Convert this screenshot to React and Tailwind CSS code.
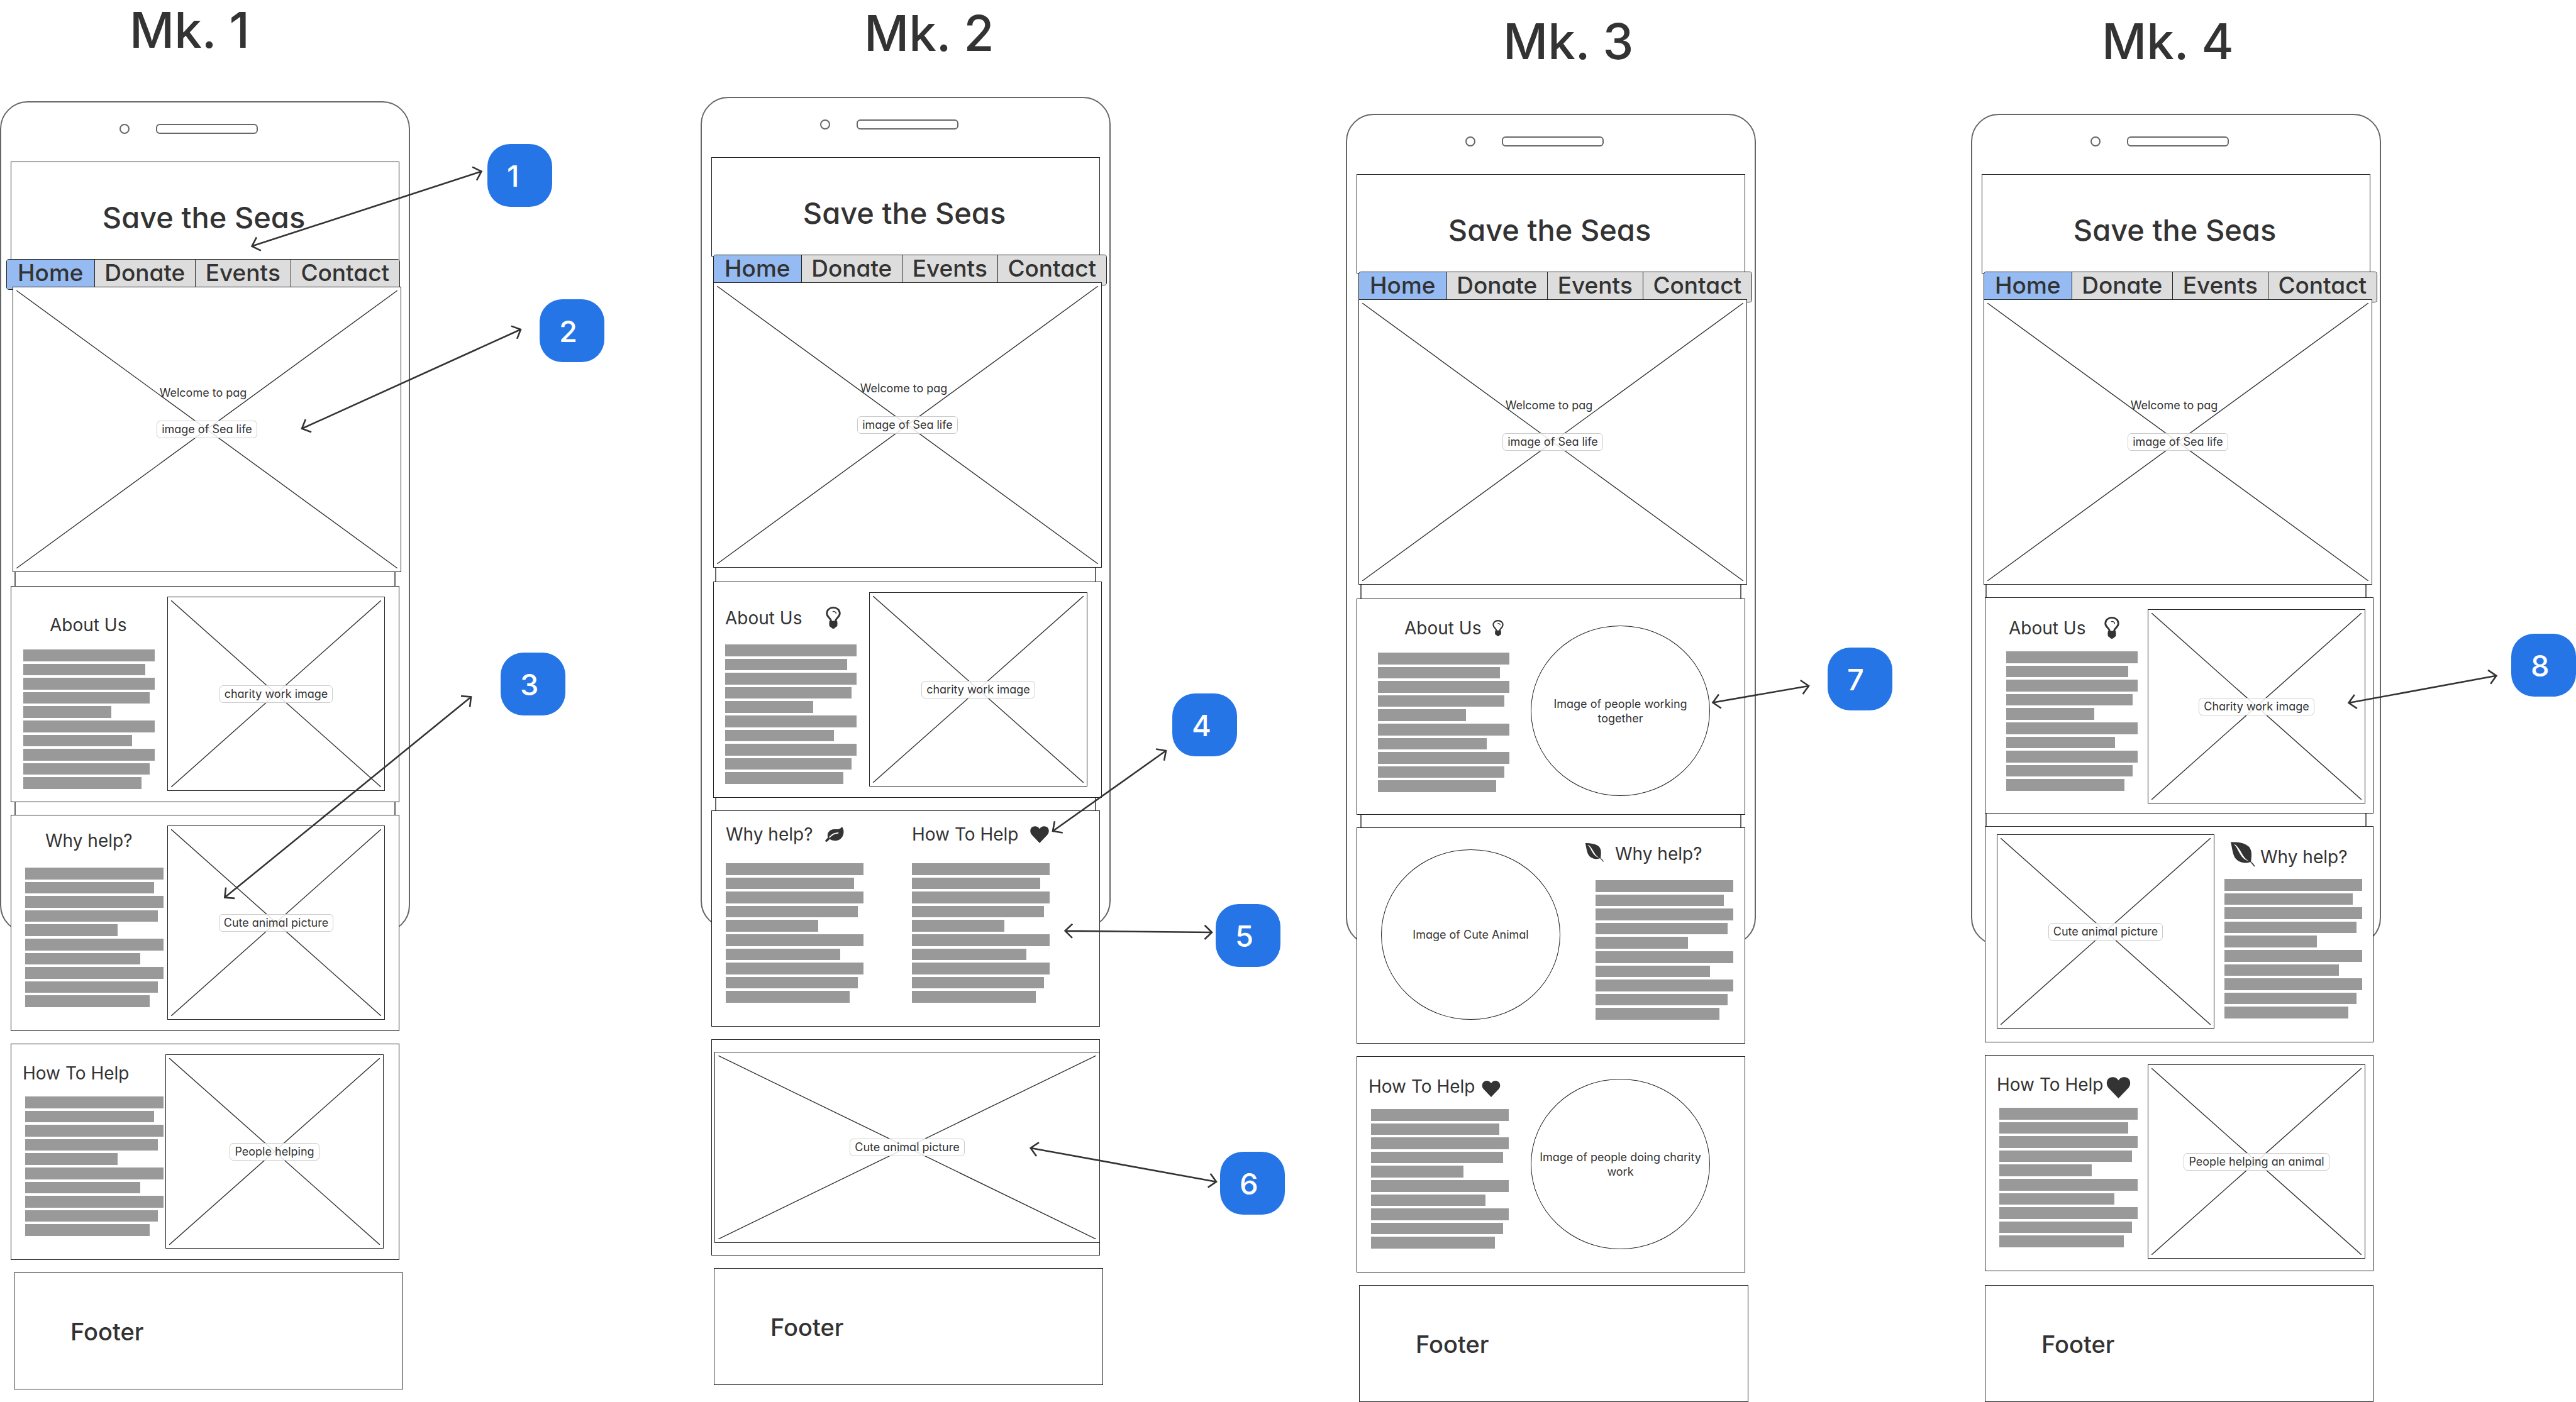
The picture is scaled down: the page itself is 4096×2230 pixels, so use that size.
import React from "react";

const LINES = [
  "w-full",
  "w-[93%]",
  "w-full",
  "w-[96%]",
  "w-[67%]",
  "w-full",
  "w-[83%]",
  "w-full",
  "w-[96%]",
  "w-[90%]",
];

function BulbIcon({ className }) {
  return (
    <svg viewBox="0 0 37 55" className={className} aria-hidden="true">
      <path
        d="M13 37 C13 28 2.3 27 2.3 16.5 C2.3 8 9.5 2.3 18.5 2.3 C27.500 2.300 34.700 8 34.700 16.500 C34.700 27 24 28 24 37"
        fill="none"
        stroke="#333"
        strokeWidth="4.4"
      />
      <path d="M17.500 12 C21.500 11.500 25 13 25.500 17" fill="none" stroke="#333" strokeWidth="2.200" strokeLinecap="round" />
      <path d="M10 35.500 H27 Q29.500 37.500 28.500 40 Q29.500 42 28.500 44 Q29.500 46 28 48 Q27.500 51 24 51.500 Q22 55 18.500 55 Q15 55 13 51.500 Q9.500 51 9 48 Q7.500 46 8.500 44 Q7.500 42 8.500 40 Q7.500 37.500 10 35.500 Z" fill="#333" />
    </svg>
  );
}

function HeartIcon({ className }) {
  return (
    <svg viewBox="0 0 48 43" className={className} aria-hidden="true">
      <path d="M24 43 L4 22 C-2 15 0 5 6 2 C13 -2 21 1 24 7 C27 1 35 -2 42 2 C48 5 50 15 44 22 Z" fill="#333" />
    </svg>
  );
}

function SwayLeafIcon({ className }) {
  return (
    <svg viewBox="0 0 48 39" className={className} aria-hidden="true">
      <path d="M43 0 C46 3 48 9 47.500 15 C46.500 28 37 36 26 36 C20 36 15 34 12 32 C9 33 7 38 3 39 C0 39 -1 36 1 34 C3 32 6 30 6.500 28 C5 22 6 15 11 11 C19 4 27 8 35 6 C39 5 41 3 43 0 Z" fill="#333" />
      <path d="M11 27 C18 20 22 17 33 16" fill="none" stroke="#fff" strokeWidth="3" strokeLinecap="round" />
    </svg>
  );
}

function PointLeafIcon({ className }) {
  return (
    <svg viewBox="0 0 64 65" className={className} aria-hidden="true">
      <path d="M0 0 C20 0 36 3 46 11 C56 20 55 35 52.700 51 C58 55 61 60 64 64 H61 L51 52 C38 57 24 55 14 45 C5 35 4 16 0 0 Z" fill="#333" />
      <path d="M8 6 C14 7 20 14 28 28 C34 39 40 47 50 51.500 C38 48 30 42 24 31 C17 18 14 11 8 6 Z" fill="#fff" />
    </svg>
  );
}

function Cross() {
  return (
    <svg
      viewBox="0 0 100 100"
      preserveAspectRatio="none"
      className="absolute inset-[5px] h-[calc(100%-10px)] w-[calc(100%-10px)]"
      aria-hidden="true"
    >
      <path d="M0 0 L100 100 M100 0 L0 100" stroke="#333" strokeWidth="1.400" fill="none" vectorEffect="non-scaling-stroke" />
    </svg>
  );
}

function Picture({ label, className, children }) {
  return (
    <figure className={`relative flex items-center justify-center border border-[#222] bg-white ${className}`}>
      <Cross />
      {children}
      <figcaption className="relative h-7 rounded-md border border-[#ccc] bg-white/85 px-[7px] text-[18px] leading-[26px] font-normal whitespace-nowrap">
        {label}
      </figcaption>
    </figure>
  );
}

function Round({ label, className }) {
  return (
    <figure className={`flex h-[271px] items-center justify-center rounded-[50%] border border-[#222] bg-white ${className}`}>
      <figcaption className="px-1 text-center text-[18px] leading-[23px] font-normal">{label}</figcaption>
    </figure>
  );
}

function TextBlock({ title, head, className, icon, before, align = "items-center" }) {
  return (
    <div className={`shrink-0 ${className}`}>
      <div className={`flex items-start ${head}`}>
        <div className={`flex ${align}`}>
          {before}
          <h3 className="text-[28px] leading-8 font-normal whitespace-nowrap">{title}</h3>
          {icon}
        </div>
      </div>
      <div className="flex h-[222px] flex-col gap-1">
        {LINES.map((w, i) => (
          <div key={i} className={`flex-1 bg-[#999] ${w}`} />
        ))}
      </div>
    </div>
  );
}

function Card({ className, children }) {
  return <article className={`relative flex h-[344px] items-start border border-[#222] bg-white ${className}`}>{children}</article>;
}

function Tab({ active, children }) {
  return (
    <a
      href="#"
      className={`flex justify-center border-[#222] text-[37px] leading-[42px] not-last:border-r ${active ? "bg-[#95bbf2]" : "bg-[#ddd]"}`}
    >
      {children}
    </a>
  );
}

function Mockup({ title, titleClass, navClass, footerClass, children, className }) {
  return (
    <section className={`min-w-0 ${className}`}>
      <h2 className={`text-[78px] leading-[84px] whitespace-nowrap ${titleClass}`}>{title}</h2>
      <div className="relative">
        <div className="absolute inset-x-0 top-0 h-[1323px] rounded-[44px] border-2 border-[#666] bg-white" />
        <div className="absolute inset-x-[23px] top-24 h-[1180px] border-2 border-[#666]" />
        <div className="relative">
          <div className="flex h-24 items-start gap-[42px] pt-[36px] pl-[190px]">
            <div className="size-4 rounded-full border-2 border-[#666]" />
            <div className="h-4 w-[162px] rounded-md border-2 border-[#666]" />
          </div>
          <header className="mx-[17px] flex h-[158px] items-center justify-center border border-[#222] bg-white pt-5 pr-1">
            <h1 className="text-[47px] leading-[60px]">Save the Seas</h1>
          </header>
          <nav
            className={`relative -mt-[3px] grid h-[49px] grid-cols-[140fr_161fr_152fr_173fr] overflow-hidden rounded-sm border border-[#222] ${navClass}`}
          >
            <Tab active>Home</Tab>
            <Tab>Donate</Tab>
            <Tab>Events</Tab>
            <Tab>Contact</Tab>
          </nav>
          <Picture label="image of Sea life" className="-mt-[5px] mr-[14px] ml-5 h-[454px]">
            <p className="absolute inset-x-0 top-[156px] pr-3 text-center text-[18px] leading-6 font-normal">Welcome to pag</p>
          </Picture>
          {children}
          <footer className={`relative h-[186px] border border-[#222] bg-white pt-[73px] pl-[89px] ${footerClass}`}>
            <p className="text-[38px] leading-10">Footer</p>
          </footer>
        </div>
      </div>
    </section>
  );
}

const CALLOUTS = [
  { n: 1, x: 775, y: 229, from: [400.5, 391.6], to: [765.5, 272.6] },
  { n: 2, x: 858, y: 476, from: [480, 681.8], to: [828, 524] },
  { n: 3, x: 796, y: 1038, from: [357.3, 1427.5], to: [749, 1108.5] },
  { n: 4, x: 1864, y: 1103, from: [1674, 1322], to: [1854, 1194] },
  { n: 5, x: 1933, y: 1438, from: [1693.6, 1480.6], to: [1927, 1483] },
  { n: 6, x: 1940, y: 1832, from: [1638.7, 1826], to: [1934, 1879.7] },
  { n: 7, x: 2906, y: 1030, from: [2723.5, 1117.5], to: [2876, 1091] },
  { n: 8, x: 3993, y: 1008, from: [3734.5, 1118], to: [3969.4, 1074.8] },
];

const BOARD_W = 4096;
const BOARD_H = 2230;

function headPath([x, y], angle) {
  const arm = (t) => `${x + 16 * Math.cos(angle + t)} ${y + 16 * Math.sin(angle + t)}`;
  return `M${arm(0.77)} L${x} ${y} L${arm(-0.77)}`;
}

function Arrows() {
  return (
    <svg
      viewBox={`0 0 ${BOARD_W} ${BOARD_H}`}
      preserveAspectRatio="none"
      className="pointer-events-none absolute inset-0 h-full w-full"
      aria-hidden="true"
    >
      {CALLOUTS.map(({ n, from, to }) => {
        const a = Math.atan2(to[1] - from[1], to[0] - from[0]);
        return (
          <path
            key={n}
            d={`M${from.join(" ")} L${to.join(" ")} ${headPath(from, a)} ${headPath(to, a + Math.PI)}`}
            fill="none"
            stroke="#333"
            strokeWidth="2.600"
          />
        );
      })}
    </svg>
  );
}

export default function App() {
  return (
    <main className="relative grid w-full grid-cols-[652fr_462fr_652fr_374fr_652fr_342fr_652fr_310fr] overflow-hidden bg-white font-['Inter',sans-serif] font-medium text-[#333] [font-feature-settings:'cv11']">
      <Mockup title="Mk. 1" className="col-start-1" titleClass="h-[161px] pt-[6px] pl-[206px]" navClass="mr-4 ml-[10px]" footerClass="mt-5 mr-[11px] ml-[22px]">
        <Card className="mx-[17px] mt-[22px] pr-[22px] pl-[19px]">
          <TextBlock title="About Us" className="w-[209px]" head="h-[100px] pt-[45px] pl-[42px]" />
          <Picture label="charity work image" className="mt-4 ml-5 h-[309px] flex-1" />
        </Card>
        <Card className="mx-[17px] mt-5 pr-[22px] pl-[22px]">
          <TextBlock title="Why help?" className="w-[220px]" head="h-[83px] pt-6 pl-[32px]" />
          <Picture label="Cute animal picture" className="mt-4 ml-1.5 h-[309px] flex-1" />
        </Card>
        <Card className="mx-[17px] mt-5 pr-[24px] pl-[22px]">
          <TextBlock title="How To Help" className="w-[220px]" head="-ml-1 h-[83px] pt-[30px]" />
          <Picture label="People helping" className="mt-4 ml-[3px] h-[309px] flex-1" />
        </Card>
      </Mockup>

      <Mockup title="Mk. 2" className="col-start-3" titleClass="h-[154px] pt-[11px] pl-[260px]" navClass="mr-[6px] ml-5" footerClass="mt-5 mr-[12px] ml-[21px]">
        <Card className="mt-[22px] mr-[14px] ml-5 pr-[22px] pl-[18px]">
          <TextBlock title="About Us" className="w-[209px]" head="h-[99px] pt-[39px]" icon={<BulbIcon className="ml-[38px] h-[35px] w-6" />} />
          <Picture label="charity work image" className="mt-4 ml-5 h-[309px] flex-1" />
        </Card>
        <Card className="mx-[17px] mt-5 pl-[22px]">
          <TextBlock title="Why help?" className="w-[219px]" head="h-[83px] pt-[21px]" icon={<SwayLeafIcon className="ml-5 h-6 w-[30px]" />} />
          <TextBlock title="How To Help" className="ml-[77px] w-[219px]" head="h-[83px] pt-[21px]" icon={<HeartIcon className="ml-[18px] h-[27px] w-[30px]" />} />
        </Card>
        <Card className="mx-[17px] mt-5 pl-1">
          <Picture label="Cute animal picture" className="mt-[19px] -mr-px h-[304px] flex-1" />
        </Card>
      </Mockup>

      <Mockup title="Mk. 3" className="col-start-5" titleClass="h-[181px] pt-6 pl-[250px]" navClass="mr-[6px] ml-5" footerClass="mt-5 mr-[12px] ml-[21px]">
        <Card className="mx-[17px] mt-[22px] pr-[55px] pl-[33px]">
          <TextBlock title="About Us" className="w-[209px]" head="h-[85px] pt-[30px] pl-[42px]" icon={<BulbIcon className="ml-[18px] h-[26px] w-[18px]" />} />
          <Round label="Image of people working together" className="mt-[42px] ml-[34px] flex-1" />
        </Card>
        <Card className="mx-[17px] mt-5 pr-[16px] pl-[38px]">
          <Round label="Image of Cute Animal" className="mt-[34px] w-[285px]" />
          <TextBlock
            title="Why help?"
            className="ml-14 w-[219px]"
            head="-ml-[17px] h-[83px] pt-6"
            before={<PointLeafIcon className="mr-[17px] mb-1 h-[30px] w-[31px]" />}
          />
        </Card>
        <Card className="mx-[17px] mt-5 pr-[55px] pl-[22px]">
          <TextBlock
            title="How To Help"
            className="w-[219px]"
            head="-ml-1 h-[83px] pt-[30px]"
            icon={<HeartIcon className="mt-2 ml-2.5 h-[26px] w-[30px]" />}
          />
          <Round label="Image of people doing charity work" className="mt-[35px] ml-[35px] flex-1" />
        </Card>
      </Mockup>

      <Mockup title="Mk. 4" className="col-start-7" titleClass="h-[181px] pt-6 pl-[208px]" navClass="mr-[6px] ml-5" footerClass="mt-[22px] mr-[12px] ml-[22px]">
        <Card className="mt-5 mr-[12px] ml-[22px] pr-3 pl-[33px]">
          <TextBlock title="About Us" className="w-[209px]" head="h-[85px] pt-[30px] pl-1" icon={<BulbIcon className="ml-[30px] h-[35px] w-6" />} />
          <Picture label="Charity work image" className="mt-[18px] ml-4 h-[309px] flex-1" />
        </Card>
        <Card className="mt-5 mr-[12px] ml-[22px] pr-4 pl-[18px]">
          <Picture label="Cute animal picture" className="mt-[12px] h-[309px] w-[346px]" />
          <TextBlock
            title="Why help?"
            className="ml-4 w-[219px]"
            head="h-[83px] pt-6 pl-[10px]"
            align="items-end"
            before={<PointLeafIcon className="mr-2 h-10 w-[39px]" />}
          />
        </Card>
        <Card className="mt-5 mr-[12px] ml-[22px] pr-3 pl-[22px]">
          <TextBlock
            title="How To Help"
            className="w-[220px]"
            head="-ml-1 h-[83px] pt-[30px]"
            align="items-start"
            icon={<HeartIcon className="mt-1 ml-1 h-[34px] w-[39px]" />}
          />
          <Picture label="People helping an animal" className="mt-[14px] ml-4 h-[309px] flex-1" />
        </Card>
      </Mockup>

      <Arrows />
      {CALLOUTS.map(({ n, x, y }) => (
        <div
          key={n}
          className="absolute flex h-[100px] w-[103px] items-center rounded-[36px] bg-[#2575e7] pl-[31px] text-[47px] leading-none text-white"
          style={{ left: `${(x / BOARD_W) * 100}%`, top: `${(y / BOARD_H) * 100}%` }}
        >
          {n}
        </div>
      ))}
    </main>
  );
}
